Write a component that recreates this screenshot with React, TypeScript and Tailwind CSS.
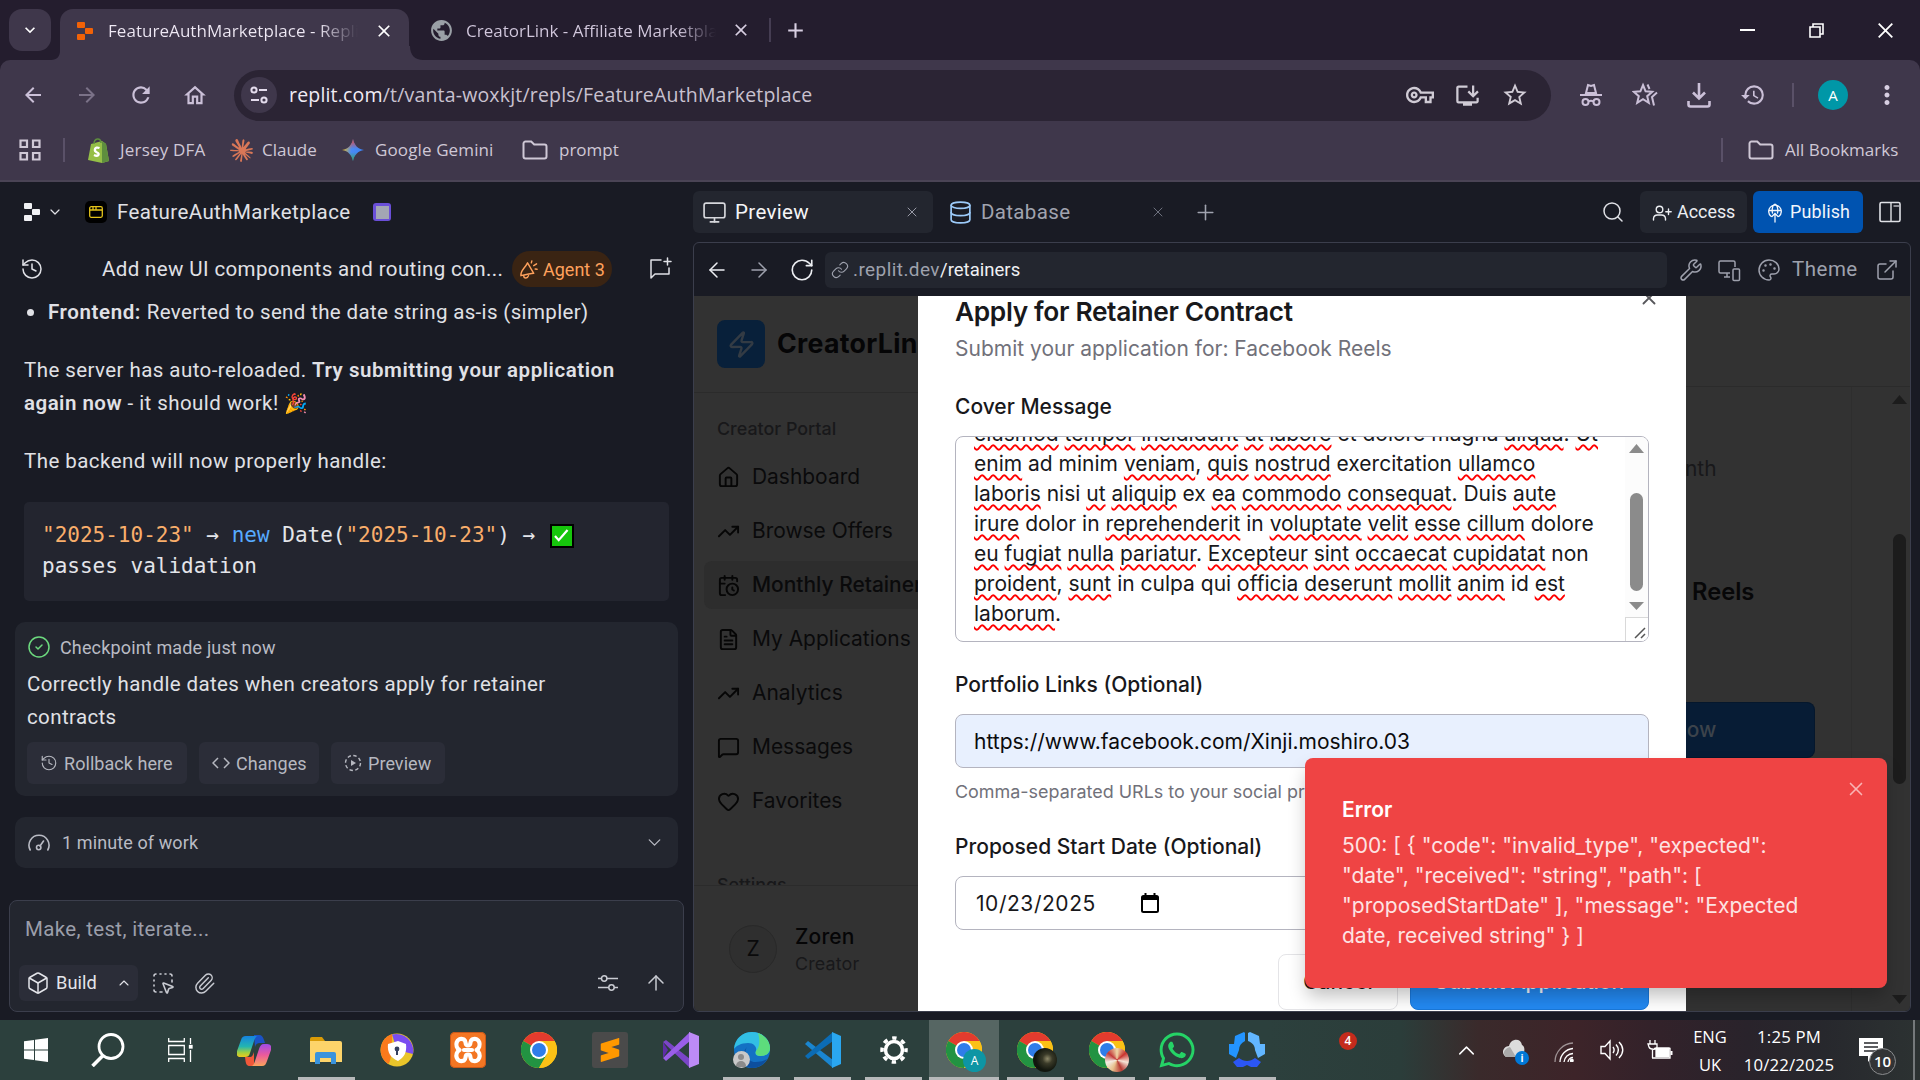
import type { ReactNode } from "react";
import {
  ArrowLeft, ArrowRight, ArrowUp, CalendarClock, ChevronDown, ChevronUp, Database, ExternalLink, FileText,
  Heart, History, House, Link, MessageSquare, Monitor, Palette, Paperclip, Plus, RotateCw, Search,
  SquareDashedMousePointer, TrendingUp, Wrench, X, Zap, Box, CircleCheck,
} from "lucide-react";
import {
  MdArrowBack, MdArrowForward, MdClose, MdHistory, MdMoreVert, MdOutlineHome, MdOutlineInstallDesktop,
  MdOutlineVpnKey, MdPublic, MdRefresh, MdStarBorder, MdExpandMore, MdAdd,
} from "react-icons/md";
import { FaWhatsapp } from "react-icons/fa6";
import { SiSublimetext, SiXampp, SiClaude } from "react-icons/si";

const UI = "font-['Open_Sans','Noto_Sans',sans-serif]";
const REPLIT = "font-['Roboto','Noto_Sans',sans-serif]";
const INTER = "font-['Inter',sans-serif]";

/* A fixed-size cell that centres an icon. */
function Cell({ className, children }: { className: string; children?: ReactNode }) {
  return <div className={`flex shrink-0 items-center justify-center ${className}`}>{children}</div>;
}

function ReplitMark({ className }: { className: string }) {
  return (
    <svg viewBox="0 0 16 18" className={className} fill="currentColor">
      <rect x="0" y="0" width="8" height="6" rx="1" />
      <rect x="8" y="6" width="8" height="6" rx="1" />
      <rect x="0" y="12" width="8" height="6" rx="1" />
    </svg>
  );
}

function FolderIcon() {
  return (
    <svg viewBox="0 0 26 20" className="h-5 w-[26px]" fill="none" stroke="currentColor" strokeWidth="2">
      <path d="M1.5 3.5a2 2 0 0 1 2-2h5.7l3 3h10.3a2 2 0 0 1 2 2v10a2 2 0 0 1-2 2h-19a2 2 0 0 1-2-2z" />
    </svg>
  );
}

function TabStrip() {
  return (
    <div className="flex h-[60px] bg-[#241d2e] text-[#d8cfe2]">
      <Cell className="ml-[9px] mt-[9px] h-[42px] w-[42px] rounded-[13px] bg-[#3f374b]">
        <MdExpandMore className="size-[20px] text-white" />
      </Cell>
      <svg viewBox="0 0 14 14" className="mt-[46px] h-[14px] w-[14px] shrink-0 -mr-[5px]" fill="#3f374b">
        <path d="M14 0v14H0c6 0 9-4 9-9V0z" />
      </svg>
      <div className="mt-[9px] flex h-[51px] w-[349px] items-center rounded-t-[13px] bg-[#3f374b] pb-[8px]">
        <ReplitMark className="ml-[17px] h-[18px] w-[16px] text-[#f26207]" />
        <div className="ml-[15px] w-[250px] overflow-hidden whitespace-nowrap bg-linear-to-r from-[#efe9f5] from-84% to-[#3f374b] bg-clip-text pt-px text-[17px] tracking-[0.050px] text-transparent">
          FeatureAuthMarketplace - Replit
        </div>
        <MdClose className="ml-[16px] size-[20px] text-white" />
      </div>
      <svg viewBox="0 0 14 14" className="mt-[46px] h-[14px] w-[14px] shrink-0" fill="#3f374b">
        <path d="M0 0v14h14C6 14 1 9 1 0z" />
      </svg>
      <div className="mt-[9px] flex h-[42px] items-center">
        <MdPublic className="ml-[6px] size-[25px] text-[#9aa0a6]" />
        <div className="ml-[12px] w-[250px] overflow-hidden whitespace-nowrap bg-linear-to-r from-[#d3c9de] from-85% to-[#241d2e] bg-clip-text pt-px text-[17px] text-transparent">
          CreatorLink - Affiliate Marketplace
        </div>
        <MdClose className="ml-[15px] size-[20px]" />
        <div className="ml-[18px] h-[24px] w-[2px] bg-[#453d52]" />
        <MdAdd className="ml-[12px] size-[25px]" />
      </div>
      <div className="ml-auto flex h-[60px] items-center text-white">
        <Cell className="w-[70px]"><div className="h-[2px] w-[15px] bg-white" /></Cell>
        <Cell className="w-[69px]">
          <svg viewBox="0 0 15 15" className="size-[15px]" fill="none" stroke="white" strokeWidth="1.6">
            <path d="M1 4h10v10H1zM4 4V1h10v10h-3" />
          </svg>
        </Cell>
        <Cell className="w-[69px]">
          <svg viewBox="0 0 15 15" className="size-[15px]" fill="none" stroke="white" strokeWidth="1.8">
            <path d="M.7.7l13.6 13.6M14.3.7L.7 14.3" />
          </svg>
        </Cell>
      </div>
    </div>
  );
}

function AddressBar() {
  return (
    <div className="flex h-[70px] items-center rounded-t-[10px] bg-[#3f374b] text-[#cbc0d8]">
      <Cell className="ml-[20px] w-[26px]"><MdArrowBack className="size-[24px]" /></Cell>
      <Cell className="ml-[28px] w-[26px]"><MdArrowForward className="size-[24px] text-[#7b7288]" /></Cell>
      <Cell className="ml-[28px] w-[26px]"><MdRefresh className="size-[26px]" /></Cell>
      <Cell className="ml-[28px] w-[26px]"><MdOutlineHome className="size-[27px]" /></Cell>
      <div className="ml-[26px] flex h-[51px] w-[1317px] items-center rounded-full bg-[#2b2434]">
        <Cell className="ml-[7px] size-[36px] rounded-full bg-[#3f374b]">
          <svg viewBox="0 0 20 20" className="size-[20px]" fill="none" stroke="#e4dced" strokeWidth="2">
            <circle cx="5" cy="5" r="2.6" /><path d="M10 5h8M2 15h8" /><circle cx="15" cy="15" r="2.6" />
          </svg>
        </Cell>
        <div className="ml-[12px] whitespace-nowrap text-[19.5px] tracking-[0.18px] text-[#c9c2d0]">
          <span className="text-[#f1ecf5]">replit.com</span>/t/vanta-woxkjt/repls/FeatureAuthMarketplace
        </div>
        <MdOutlineVpnKey className="ml-auto size-[28px] text-[#d0cbd5]" />
        <MdOutlineInstallDesktop className="ml-[20px] size-[27px] text-[#d0cbd5]" />
        <MdStarBorder className="ml-[20px] mr-[22px] size-[28px] text-[#d0cbd5]" />
      </div>
      <Cell className="ml-[27px] w-[26px]">
        <svg viewBox="0 0 22 24" className="h-[24px] w-[22px]" fill="none" stroke="currentColor" strokeWidth="2">
          <path d="M6 10l2-8 3 1 3-1 2 8zM0 12h22" /><circle cx="5.5" cy="19" r="3" /><circle cx="16.500" cy="19" r="3" /><path d="M8.500 18.500c1.500-1 3.500-1 5 0" />
        </svg>
      </Cell>
      <Cell className="ml-[27px] w-[28px]">
        <svg viewBox="0 0 26 26" className="size-[26px]" fill="none" stroke="currentColor" strokeWidth="2">
          <path d="M11 3l2.600 6.300 6.600.5-5 4.400 1.600 6.600L11 17.200l-5.800 3.600 1.600-6.600-5-4.400 6.600-.5z" />
          <path d="M15.500 2.500l2 4.500M25 10.500l-5 4.500 2 8.500" />
        </svg>
      </Cell>
      <Cell className="ml-[27px] w-[26px]">
        <svg viewBox="0 0 24 26" className="h-[26px] w-[24px]" fill="none" stroke="currentColor" strokeWidth="2.600">
          <path d="M12 1v15M6 10.500l6 6 6-6M1.500 19v3.500a2 2 0 0 0 2 2h17a2 2 0 0 0 2-2V19" />
        </svg>
      </Cell>
      <Cell className="ml-[28px] w-[26px]"><MdHistory className="size-[26px]" /></Cell>
      <div className="ml-[26px] h-[24px] w-[2px] bg-[#5a5168]" />
      <Cell className="ml-[24px] size-[30px] rounded-full bg-[#0097a7] text-[15px] text-white">A</Cell>
      <MdMoreVert className="ml-[24px] size-[30px] text-[#d8cfe2]" />
    </div>
  );
}

function Bookmarks() {
  return (
    <div className="flex h-[50px] items-center bg-[#3f374b] pb-[10px] text-[17px] whitespace-nowrap text-[#cfc8d6]">
      <svg viewBox="0 0 22 22" className="ml-[19px] size-[22px]" fill="none" stroke="#cfc8d6" strokeWidth="2.200">
        <path d="M1.500 1.500h6.500V8H1.500zM14 1.500h6.500V8H14zM1.500 14h6.500v6.500H1.500zM14 14h6.500v6.500H14z" />
      </svg>
      <div className="ml-[22px] h-[24px] w-[2px] bg-[#5a5168]" />
      <svg viewBox="0 0 22 25" className="ml-[23px] h-[25px] w-[22px]">
        <path d="M3 6l11-3 4 3 3 17-7 2L0 22z" fill="#95bf47" /><path d="M14 3l4 3 3 17-7 2z" fill="#5e8e3e" />
        <path d="M6 6c0-6 7-7 7-1" fill="none" stroke="#5e8e3e" strokeWidth="1.500" />
        <path d="M11.500 10c-5-2-6 3-2.500 4.500s1 4.500-3 2.500" fill="none" stroke="white" strokeWidth="2.300" />
      </svg>
      <div className="ml-[10px] w-[110px] tracking-[0.200px]">Jersey DFA</div>
      <SiClaude className="size-[23px] text-[#d97757]" />
      <div className="ml-[9px] w-[80px]">Claude</div>
      <svg viewBox="0 0 22 22" className="size-[22px]">
        <defs>
          <linearGradient id="gem" x1="0" y1="0.300" x2="1" y2="0.500">
            <stop offset="0" stopColor="#fbbc04" /><stop offset=".45" stopColor="#4a8af4" /><stop offset="1" stopColor="#3b82f6" />
          </linearGradient>
          <linearGradient id="gem2" x1="0" y1="0" x2="0" y2="1">
            <stop offset="0" stopColor="#ea4335" /><stop offset=".45" stopColor="#ea4335" stopOpacity="0" />
            <stop offset=".6" stopColor="#34a853" stopOpacity="0" /><stop offset="1" stopColor="#34a853" />
          </linearGradient>
        </defs>
        <path d="M11 0c1 6 5 10 11 11-6 1-10 5-11 11C10 16 6 12 0 11 6 10 10 6 11 0z" fill="url(#gem)" />
        <path d="M11 0c1 6 5 10 11 11-6 1-10 5-11 11C10 16 6 12 0 11 6 10 10 6 11 0z" fill="url(#gem2)" />
      </svg>
      <div className="ml-[11px] w-[147px] tracking-[0.120px]">Google Gemini</div>
      <FolderIcon />
      <div className="ml-[11px]">prompt</div>
      <div className="ml-auto h-[24px] w-[2px] bg-[#5a5168]" />
      <div className="ml-[25px] flex"><FolderIcon /></div>
      <div className="ml-[11px] w-[135px]">All Bookmarks</div>
    </div>
  );
}

function SmallButton({ className, icon, label }: { className: string; icon: ReactNode; label: string }) {
  return (
    <div className={`flex h-[42px] items-center rounded-[6px] bg-[#2b2d38] pl-[13px] text-[18px] text-[#b6b8c0] ${className}`}>
      {icon}
      <span className="ml-[6px] whitespace-nowrap">{label}</span>
    </div>
  );
}

function AgentPanel() {
  return (
    <div className="flex w-[693px] shrink-0 flex-col text-[20.500px] tracking-[0.330px] whitespace-nowrap text-[#e0e1e6]">
      <div className="mt-[9px] flex h-[42px] items-center">
        <ReplitMark className="ml-[24px] h-[18px] w-[16px] text-[#f0f1f4]" />
        <ChevronDown className="ml-[7px] size-[16px]" strokeWidth={1.8} />
        <Cell className="ml-[22px] size-[22px] rounded-[5px] bg-black">
          <svg viewBox="0 0 14 12" className="h-[12px] w-[14px]" fill="none" stroke="#e3c31a" strokeWidth="1.300">
            <rect x=".7" y=".7" width="12.600" height="10.600" rx="1.500" /><path d="M1 4h12M4 .7V4M7 .7V4" />
          </svg>
        </Cell>
        <span className="ml-[10px] w-[256px] tracking-[0.420px]">FeatureAuthMarketplace</span>
        <Cell className="size-[18px] rounded-[3px] bg-[#6a4fd8]"><div className="size-[13px] bg-[#a3a6b4]" /></Cell>
      </div>
      <div className="mt-[18px] flex h-[36px] items-center">
        <History className="ml-[20px] size-[24px]" strokeWidth={1.5} />
        <span className="ml-[58px] w-[410px] tracking-[0.380px]">Add new UI components and routing con...</span>
        <div className="flex h-[36px] w-[100px] items-center rounded-full bg-[#3a2413] pt-px text-[18px] tracking-normal text-[#ffa15c]">
          <svg viewBox="0 0 20 20" className="ml-[7px] size-[19px]" fill="none" stroke="currentColor" strokeWidth="1.500" strokeLinejoin="round" strokeLinecap="round">
            <path d="M9 3l6.500 11c-3 .2-10 1.700-13.500 2.500C1.500 11 6 9 9 3zM5 16.500c0 3 4 3.500 5 0M13 3l.5-2M15.500 6l3-2M17 9.500l2 .3" />
          </svg>
          <span className="ml-[5px]">Agent 3</span>
        </div>
        <svg viewBox="0 0 24 24" className="ml-[36px] size-[24px]" fill="none" stroke="currentColor" strokeWidth="1.500" strokeLinecap="round" strokeLinejoin="round">
          <path d="M13 3H3v18l4-4h14v-6M19.500 1v7M16 4.500h7" />
        </svg>
      </div>
      <div className="mt-[9px] flex h-[33px] items-center">
        <div className="ml-[27px] mr-[14px] size-[7px] rounded-full bg-[#e0e1e6]" />
        <span className="tracking-[0.350px]"><b className="font-semibold tracking-[0.600px]">Frontend: </b>Reverted to send the date string as-is (simpler)</span>
      </div>
      <div className="mt-[25px] ml-[24px] leading-[33px] tracking-[0.430px]">
        The server has auto-reloaded. <b className="font-semibold tracking-[0.540px]">Try submitting your application</b>
        <br />
        <b className="font-semibold tracking-[0.480px]">again now</b> - it should work! <span className="text-[19px]">🎉</span>
      </div>
      <div className="mt-[25px] ml-[24px] leading-[33px] tracking-[0.450px]">The backend will now properly handle:</div>
      <div className="mt-[24px] ml-[24px] h-[99px] w-[645px] rounded-[5px] bg-[#23252f] pt-[18px] pl-[18px] font-['DejaVu_Sans_Mono',monospace] text-[21px] leading-[31px] tracking-normal text-[#e4e5ea]">
        <div className="flex h-[31px] items-center whitespace-pre">
          <span className="text-[#f9ae6b]">"2025-10-23"</span>{" → "}<span className="text-[#57abff]">new</span>{" Date("}
          <span className="text-[#f9ae6b]">"2025-10-23"</span>{") → "}
          <Cell className="ml-[2px] size-[24px] border-2 border-black bg-[#16c60c]">
            <svg viewBox="0 0 16 14" className="h-[13px] w-[15px]" fill="none" stroke="white" strokeWidth="2.400"><path d="M1 7.500l4 4.500L14.500 1" /></svg>
          </Cell>
        </div>
        passes validation
      </div>
      <div className="mt-[21px] ml-[15px] h-[174px] w-[663px] rounded-[10px] bg-[#23262f]">
        <div className="mt-[10px] flex h-[30px] items-center text-[18px] tracking-[0.150px] text-[#b9bbc4]">
          <CircleCheck className="ml-[12px] size-[24px] text-[#6cd97e]" strokeWidth={1.5} />
          <span className="ml-[9px]">Checkpoint made just now</span>
        </div>
        <div className="mt-[6px] ml-[12px] leading-[33px] tracking-[0.380px]">
          Correctly handle dates when creators apply for retainer
          <br />
          contracts
        </div>
        <div className="mt-[8px] ml-[12px] flex gap-3 tracking-[0.050px]">
          <SmallButton className="w-[160px]" icon={<History className="size-[18px]" strokeWidth={1.5} />} label="Rollback here" />
          <SmallButton className="w-[120px]" icon={
            <svg viewBox="0 0 18 18" className="size-[18px]" fill="none" stroke="currentColor" strokeWidth="1.500"><path d="M6 4L1 9l5 5M12 4l5 5-5 5" /></svg>
          } label="Changes" />
          <SmallButton className="w-[114px]" icon={
            <svg viewBox="0 0 18 18" className="size-[18px]" fill="none" stroke="currentColor" strokeWidth="1.400"><circle cx="9" cy="9" r="7.500" strokeDasharray="3.500 2.400" /><path d="M7 6l5 3-5 3z" fill="currentColor" stroke="none" /></svg>
          } label="Preview" />
        </div>
      </div>
      <div className="mt-[21px] ml-[15px] flex h-[51px] w-[663px] items-center rounded-[10px] bg-[#23262f] text-[18px] tracking-[0.100px] text-[#b9bbc4]">
        <svg viewBox="0 0 22 18" className="ml-[13px] h-[18px] w-[22px]" fill="none" stroke="currentColor" strokeWidth="1.600" strokeLinecap="round">
          <path d="M2.200 16A10 10 0 1 1 19.800 16M12 12l3.500-5" /><circle cx="10.700" cy="13.500" r="2.200" />
        </svg>
        <span className="ml-[12px]">1 minute of work</span>
        <ChevronDown className="mr-[13px] ml-auto size-[21px]" strokeWidth={1.5} />
      </div>
      <div className="mt-[32px] ml-[9px] h-[112px] w-[675px] rounded-[8px] border border-[#3b3e4c] bg-[#23262f]">
        <div className="mt-[12px] ml-[15px] leading-[33px] text-[#9b9eaa]">Make, test, iterate...</div>
        <div className="mt-[19px] flex h-[36px] items-center text-[#c9cbd2]">
          <div className="ml-[9px] flex h-[36px] w-[119px] items-center rounded-[6px] bg-[#2b2d38] text-[18.200px] tracking-[0.100px] text-[#e4e5ea]">
            <Box className="ml-[7px] size-[24px]" strokeWidth={1.5} />
            <span className="ml-[6px] w-[42px]">Build</span>
            <ChevronUp className="ml-[18px] size-[16px]" strokeWidth={1.6} />
          </div>
          <SquareDashedMousePointer className="ml-[13px] size-[24px]" strokeWidth={1.6} />
          <Paperclip className="ml-[18px] size-[23px]" strokeWidth={1.5} />
          <svg viewBox="0 0 22 18" className="mr-[25px] ml-auto h-[18px] w-[22px]" fill="none" stroke="currentColor" strokeWidth="1.500">
            <path d="M1 4.500h4M9.500 4.500H21M1 13.500h11M17 13.500h4" /><circle cx="7.200" cy="4.500" r="2.700" /><circle cx="14.500" cy="13.500" r="2.700" />
          </svg>
          <ArrowUp className="mr-[15px] size-[24px]" strokeWidth={1.5} />
        </div>
      </div>
    </div>
  );
}

function PaneTabs() {
  return (
    <div className="mt-[9px] flex h-[42px] items-center text-[20.500px] tracking-[0.350px] whitespace-nowrap text-[#a0a3af]">
      <div className="flex h-[42px] w-[240px] items-center rounded-[6px] bg-[#23262f]">
        <Monitor className="ml-[9px] size-[25px] text-[#d6d7dc]" strokeWidth={1.6} />
        <span className="ml-[8px] text-[#f5f5f7]">Preview</span>
        <X className="mr-[13px] ml-auto size-[16px]" strokeWidth={1.4} />
      </div>
      <Database className="ml-[15px] size-[25px] text-[#9ccbfa]" strokeWidth={1.6} />
      <span className="ml-[8px] w-[90px]">Database</span>
      <X className="ml-[79px] size-[16px] text-[#747784]" strokeWidth={1.4} />
      <Plus className="ml-[27px] size-[25px]" strokeWidth={1.5} />
      <Search className="ml-auto size-[24px] text-[#e0e1e6]" strokeWidth={1.5} />
      <div className="ml-[15px] flex h-[42px] w-[107px] items-center rounded-[6px] bg-[#23262f] pt-px text-[17.900px] tracking-normal text-[#eceef2]">
        <svg viewBox="0 0 20 20" className="ml-[12px] size-[20px]" fill="none" stroke="currentColor" strokeWidth="1.400" strokeLinecap="round">
          <circle cx="7.500" cy="6.500" r="3.300" /><path d="M1.500 17v-1.500a4 4 0 0 1 4-3.500h4a4 4 0 0 1 4 3.500V17M16.500 6v5.500M13.800 8.700h5.400" />
        </svg>
        <span className="ml-[5px]">Access</span>
      </div>
      <div className="ml-[6px] flex h-[42px] w-[110px] items-center rounded-[6px] bg-[#0053b0] pt-px text-[17.900px] tracking-[0.150px] text-[#f2f6fc]">
        <svg viewBox="0 0 16 20" className="ml-[14px] h-[20px] w-[16px]" fill="none" stroke="currentColor" strokeWidth="1.300" strokeLinecap="round">
          <path d="M4 13.300a6.300 6.300 0 1 1 8 0M1.700 7.500h12.600M5.500 10C4.500 6 6 1.500 8 1.200c2 .3 3.500 4.800 2.500 8.800M8 11v8M5 13.500l3-3 3 3" />
        </svg>
        <span className="ml-[7px]">Publish</span>
      </div>
      <svg viewBox="0 0 22 22" className="mr-[19px] ml-[16px] size-[22px] text-[#e0e1e6]" fill="none" stroke="currentColor" strokeWidth="1.600">
        <rect x="1" y="1.500" width="20" height="19" rx="1.500" /><path d="M12 1.500v19" strokeWidth="1.400" /><path d="M14.500 5H20" strokeWidth="1.200" />
      </svg>
    </div>
  );
}

function PaneToolbar() {
  return (
    <div className="flex h-[53px] items-center text-[#9ea1ad]">
      <ArrowLeft className="ml-[11px] size-[24px] text-[#eceef2]" strokeWidth={1.5} />
      <ArrowRight className="ml-[18px] size-[24px]" strokeWidth={1.5} />
      <RotateCw className="ml-[18px] size-[26px] text-[#eceef2]" strokeWidth={1.5} />
      <div className="ml-[10px] flex h-[36px] w-[842px] items-center rounded-[6px] bg-[#23262f] text-[18.500px] tracking-[0.020px]">
        <Link className="ml-[6px] size-[18px]" strokeWidth={1.5} />
        <span className="ml-[4px] w-[87px] pt-[2px] text-[19px] tracking-[0.420px]">.replit.dev</span>
        <span className="pt-[2px] text-[#f0f1f4]">/retainers</span>
      </div>
      <Wrench className="ml-[12px] size-[24px]" strokeWidth={1.5} />
      <svg viewBox="0 0 24 24" className="ml-[14px] size-[24px]" fill="none" stroke="currentColor" strokeWidth="1.500">
        <path d="M13 15H3.500A1.500 1.500 0 0 1 2 13.500v-9A1.500 1.500 0 0 1 3.500 3h13A1.500 1.500 0 0 1 18 4.500V9M10 15v4M7 19h6" /><rect x="16" y="11" width="6.500" height="11.500" rx="1" />
      </svg>
      <Palette className="ml-[16px] size-[24px]" strokeWidth={1.5} />
      <span className="ml-[11px] w-[66px] text-[20.500px] tracking-[0.500px]">Theme</span>
      <ExternalLink className="ml-[17px] size-[24px]" strokeWidth={1.5} />
    </div>
  );
}

function NavItem({ icon, label, active }: { icon: ReactNode; label: string; active?: boolean }) {
  return (
    <div className={`flex h-[48px] items-center rounded-l-[8px] pl-[11px] ${active ? "bg-[#2d2d2d] font-medium" : ""}`}>
      <Cell className="size-[26px]">{icon}</Cell>
      <span className="ml-[11px]">{label}</span>
    </div>
  );
}

function Sidebar() {
  const ic = "size-[23px] text-[#060606]";
  return (
    <div className="flex w-[224px] shrink-0 flex-col overflow-hidden text-[20.950px] whitespace-nowrap text-[#0a0a0b]">
      <div className="flex h-[97px] shrink-0 items-start border-b border-[#2b2b2b] pt-[24px] pl-[23px]">
        <Cell className="size-[48px] rounded-[8px] bg-[#08203a]"><Zap className="size-[29px] text-[#333b44]" strokeWidth={2} /></Cell>
        <span className="ml-[12px] text-[26.700px] leading-[47px] font-bold tracking-[0.300px] text-[#050506]">CreatorLink</span>
      </div>
      <div className="flex h-[60px] shrink-0 items-center pt-[12px] pl-[23px] text-[17.900px] font-medium text-[#18181a]">Creator Portal</div>
      <div className="ml-[10px] flex flex-col gap-[6px]">
        <NavItem icon={<House className={ic} />} label="Dashboard" />
        <NavItem icon={<TrendingUp className={ic} />} label="Browse Offers" />
        <NavItem icon={<CalendarClock className={ic} />} label="Monthly Retainers" active />
        <NavItem icon={<FileText className={ic} />} label="My Applications" />
        <NavItem icon={<TrendingUp className={ic} />} label="Analytics" />
        <NavItem icon={<MessageSquare className={ic} />} label="Messages" />
        <NavItem icon={<Heart className={ic} />} label="Favorites" />
      </div>
      <div className="h-[60px] shrink-0 overflow-hidden pt-[46px] pl-[23px] text-[17.900px] leading-[27px] font-medium text-[#18181a]">Settings</div>
      <div className="flex flex-1 border-t border-[#2b2b2b] pt-[39px] pl-[35px]">
        <Cell className="size-[48px] rounded-full border border-[#292929] bg-[#2f2f2f] text-[21px]">Z</Cell>
        <div className="ml-[18px] -mt-[3px]">
          <div className="leading-[30px] font-medium tracking-[0.200px] text-[#050506]">Zoren</div>
          <div className="-mt-px text-[17.900px] leading-[25px] tracking-[0.150px] text-[#18181a]">Creator</div>
        </div>
      </div>
    </div>
  );
}

/* Words that end in "~" are flagged by the spell checker. */
const COVER_LINES = [
  "eiusmod~ tempor~ incididunt~ ut~ labore~ et dolore magna aliqua~. Ut~",
  "enim~ ad minim veniam~, quis~ nostrud~ exercitation ullamco~",
  "laboris~ nisi ut~ aliquip~ ex ea~ commodo~ consequat~. Duis aute~",
  "irure~ dolor in reprehenderit~ in voluptate~ velit~ esse~ cillum~ dolore",
  "eu~ fugiat~ nulla~ pariatur~. Excepteur~ sint~ occaecat~ cupidatat~ non",
  "proident~, sunt~ in culpa qui officia~ deserunt~ mollit~ anim~ id est~",
  "laborum~.",
];

function SpellLine({ text }: { text: string }) {
  return (
    <div className="h-[30px] leading-[30px]">
      {text.split(" ").map((word, i) => {
        const [base, tail] = word.split("~");
        return (
          <span key={i}>
            {i > 0 && " "}
            {tail === undefined ? base : (
              <>
                <span className="underline decoration-[#ff0000] decoration-wavy decoration-[1.600px] underline-offset-[3px] [text-decoration-skip-ink:none]">{base}</span>
                {tail}
              </>
            )}
          </span>
        );
      })}
    </div>
  );
}

function FieldLabel({ className, children }: { className: string; children: ReactNode }) {
  return <div className={`h-[30px] shrink-0 leading-[30px] font-medium ${className}`}>{children}</div>;
}

function RetainerDialog() {
  return (
    <div className="relative flex w-[768px] shrink-0 flex-col overflow-hidden bg-white px-[37px] text-[21px] whitespace-nowrap text-[#18181b]">
      <X className="absolute -top-[9px] right-[26px] size-[22px] text-[#57575b]" strokeWidth={2} />
      <div className="h-[32px] shrink-0 text-[26.300px] leading-[31px] font-semibold tracking-[-0.340px]">Apply for Retainer Contract</div>
      <div className="mt-[6px] h-[30px] shrink-0 leading-[30px] text-[#71717a]">Submit your application for: Facebook Reels</div>
      <FieldLabel className="mt-[28px]">Cover Message</FieldLabel>
      <div className="mt-[14px] flex h-[206px] shrink-0 overflow-hidden rounded-[8px] border border-[#b4b4bf]">
        <div className="-mt-[18px] flex-1 pl-[18px]">
          {COVER_LINES.map((line) => <SpellLine key={line} text={line} />)}
        </div>
        <div className="flex w-[23px] flex-col items-center bg-[#fcfcfc]">
          <svg viewBox="0 0 15 9" className="mt-[7px] h-[9px] w-[15px]" fill="#8b8b8b"><path d="M0 9L7.500 0 15 9z" /></svg>
          <div className="mt-[40px] h-[98px] w-[13px] rounded-full bg-[#8b8b8b]" />
          <svg viewBox="0 0 15 8" className="mt-[11px] h-[8px] w-[15px]" fill="#8b8b8b"><path d="M0 0h15L7.500 8z" /></svg>
          <div className="mt-auto flex h-[24px] w-full items-end justify-end border-t border-l border-[#d9d9d9] bg-white p-[2px]">
            <svg viewBox="0 0 12 12" className="size-[12px]" fill="none" stroke="#555" strokeWidth="1.500"><path d="M1 11L11 1M7 11l4-4" /></svg>
          </div>
        </div>
      </div>
      <FieldLabel className="mt-[28px]">Portfolio Links (Optional)</FieldLabel>
      <div className="mt-[14px] flex h-[54px] shrink-0 items-center rounded-[8px] border border-[#b4b4bf] bg-[#e8f0fe] pt-[2px] pl-[18px] text-[#0b0b0d]">
        https://www.facebook.com/Xinji.moshiro.03
      </div>
      <div className="mt-[11px] h-[26px] w-[694px] shrink-0 text-[17.950px] leading-[26px] text-[#71717a]">Comma-separated URLs to your social profiles</div>
      <FieldLabel className="mt-[27px]">Proposed Start Date (Optional)</FieldLabel>
      <div className="mt-[14px] flex h-[54px] shrink-0 items-center rounded-[8px] border border-[#b4b4bf] pl-[20px]">
        <span className="w-[165px] pt-[2px] tracking-[0.550px]">10/23/2025</span>
        <svg viewBox="0 0 18 20" className="h-[20px] w-[18px]" fill="none" stroke="black" strokeWidth="2">
          <rect x="1" y="3" width="16" height="16" rx="1.500" /><path d="M1 5h16" strokeWidth="4" /><path d="M4.500 0v3M13.500 0v3" />
        </svg>
      </div>
      <div className="mt-[24px] flex h-[56px] shrink-0 justify-end gap-3 font-medium">
        <Cell className="w-[120px] rounded-[8px] border border-[#e4e4e7]">Cancel</Cell>
        <Cell className="w-[239px] rounded-[8px] border border-[#1a78da] bg-[#2389f2] text-[#f5faff]">Submit Application</Cell>
      </div>
    </div>
  );
}

function DimmedListing() {
  return (
    <div className="flex min-w-0 flex-1 flex-col overflow-hidden text-[20.900px] whitespace-nowrap text-[#18181a]">
      <div className="h-[91px] shrink-0 border-b border-[#2b2b2b]" />
      <div className="flex flex-1">
        <div className="flex w-[166px] flex-col border-r border-[#2e2e2e]">
          <div className="mt-[67px] -ml-px h-[30px] leading-[30px]">nth</div>
          <div className="mt-[93px] ml-[6px] h-[30px] text-[23.700px] leading-[30px] font-semibold text-[#070708]">Reels</div>
          <div className="mt-[95px] h-[56px] w-[129px] overflow-hidden rounded-r-[8px] border border-l-0 border-[#05172c] bg-[#071c35] -indent-[15px] leading-[54px] font-medium text-[#3c434b]">Now</div>
          <div className="mt-[208px] h-[30px] leading-[30px]">tent for</div>
        </div>
        <div className="flex flex-1 flex-col items-end pr-[3px]">
          <svg viewBox="0 0 15 9" className="mt-[8px] h-[9px] w-[15px]" fill="#1c1c1c"><path d="M0 9L7.500 0 15 9z" /></svg>
          <div className="mt-[130px] mr-[1px] h-[250px] w-[13px] rounded-full bg-[#1c1c1c]" />
          <svg viewBox="0 0 15 9" className="mt-auto mb-[7px] h-[9px] w-[15px]" fill="#1c1c1c"><path d="M0 0h15L7.500 9z" /></svg>
        </div>
      </div>
    </div>
  );
}

function ErrorToast() {
  return (
    <div className="absolute top-[462px] left-[611px] h-[230px] w-[582px] rounded-[8px] bg-[#ef4444] pt-[37px] pl-[37px] text-[21px] leading-[30px] whitespace-nowrap text-[#fde3e3] shadow-[0_10px_18px_-2px_rgba(0,0,0,0.25)]">
      <X className="absolute top-[20px] right-[20px] size-[22px] text-[#f9b4b4]" strokeWidth={1.8} />
      <div className="font-semibold text-white">Error</div>
      <div className="mt-[6px]">
        500: [ {"{"} "code": "invalid_type", "expected":<br />
        "date", "received": "string", "path": [<br />
        "proposedStartDate" ], "message": "Expected<br />
        date, received string" {"}"} ]
      </div>
    </div>
  );
}

function Chrome({ children }: { children?: ReactNode }) {
  return (
    <div className="relative size-[36px]">
      <svg viewBox="0 0 36 36" className="size-[36px]">
        <circle cx="18" cy="18" r="18" fill="#fbc116" />
        <path d="M18 18L2.400 9A18 18 0 0 1 33.600 9z" fill="#e33b2e" />
        <path d="M18 18L2.400 9A18 18 0 0 0 18 36l7.800-13.500z" fill="#229342" />
        <path d="M18 9h15.600A18 18 0 0 1 18 36l7.800-13.500z" fill="#fbc116" />
        <circle cx="18" cy="18" r="9" fill="white" /><circle cx="18" cy="18" r="7" fill="#2f7de9" />
      </svg>
      {children}
    </div>
  );
}

function TaskItem({ className, open, active, children }: { className: string; open?: boolean; active?: boolean; children: ReactNode }) {
  return (
    <div className={`flex h-[60px] shrink-0 flex-col items-center ${active ? "bg-[#566663]" : ""} ${className}`}>
      <Cell className="h-[57px] w-full pb-[1px] pt-[4px]">{children}</Cell>
      <div className={`h-[3px] ${active ? "w-full" : "w-[57px]"} ${open ? "bg-[#b7b9ba]" : ""}`} />
    </div>
  );
}

function Taskbar() {
  return (
    <div className={`flex h-[60px] items-start bg-[linear-gradient(90deg,#2c403d_0%,#2c403d_66%,#2b3d3a_73%,#3a2a2b_77%,#3d2429_82%,#33222a_86%,#29232b_91%,#27282d_95%,#2c3232_100%)] text-white ${UI}`}>
      <TaskItem className="w-[72px]">
        <svg viewBox="0 0 24 24" className="size-[24px]" fill="white"><path d="M0 3.300L10 2v9.500H0zM11 1.800L24 0v11.500H11zM0 12.500h10V22L0 20.700zM11 12.500h13V24l-13-1.800z" /></svg>
      </TaskItem>
      <TaskItem className="w-[71px]">
        <svg viewBox="0 0 34 34" className="size-[34px]" fill="none" stroke="white" strokeWidth="2.800"><circle cx="20" cy="13.500" r="12" /><path d="M12 22.500L1.500 33" strokeWidth="3.600" /></svg>
      </TaskItem>
      <TaskItem className="w-[74px]">
        <svg viewBox="0 0 25 24" className="h-[24px] w-[25px]" fill="none" stroke="white" strokeWidth="1.300"><path d="M.7 0v3.500h15.600V0M.7 7.500h15.600v9H.7zM.7 24v-3.500h15.600V24M22.500 0v6M22.500 12v12" /><rect x="21.500" y="7.500" width="2.500" height="2.500" fill="white" /></svg>
      </TaskItem>
      <TaskItem className="w-[74px]">
        <svg viewBox="0 0 34 31" className="h-[31px] w-[34px]">
          <defs>
            <linearGradient id="cpa" x1="0" y1="0" x2="0" y2="1"><stop offset="0" stopColor="#1583e0" /><stop offset=".5" stopColor="#23b5b0" /><stop offset=".8" stopColor="#a6cf3c" /><stop offset="1" stopColor="#ecc71e" /></linearGradient>
            <linearGradient id="cpb" x1="0" y1="0" x2="0" y2="1"><stop offset="0" stopColor="#a04be8" /><stop offset=".5" stopColor="#ec5a9b" /><stop offset="1" stopColor="#fba45c" /></linearGradient>
          </defs>
          <path d="M17 0h5c3 0 4 2 5 5l1 3h-5c-3 0-4 1-5 4z" fill="#1b52c4" />
          <path d="M9 1h12c-2 0-3 2-4 5l-4 12c-1 3-2 4-5 4H3c-3 0-4-3-3-6l4-11c1-3 2-4 5-4z" fill="url(#cpa)" />
          <path d="M17 31H13c-3 0-4-2-4.500-5L8 22h5c2 0 3-2 4-5z" fill="#f0583a" />
          <path d="M25 31H14c2 0 3-2 4-5l4-12c1-3 2-5 5-5h3c4 0 5 3 4 6l-4 11c-1 3-2 5-5 5z" fill="url(#cpb)" />
        </svg>
      </TaskItem>
      <TaskItem className="w-[70px]" open>
        <svg viewBox="0 0 32 27" className="h-[27px] w-[32px]"><path d="M0 2a2 2 0 0 1 2-2h10l3 4H0z" fill="#d99b06" /><path d="M0 4h30a2 2 0 0 1 2 2v19H0z" fill="#fdd46a" /><path d="M5 27V17a2 2 0 0 1 2-2h17a2 2 0 0 1 2 2v10h-5v-6H10v6z" fill="#3a93dc" /></svg>
      </TaskItem>
      <TaskItem className="w-[71px]">
        <svg viewBox="0 0 34 34" className="size-[34px]"><circle cx="17" cy="17" r="16.500" fill="#e9c52a" /><path d="M12 1.500A17 17 0 0 1 33 21L17 17z" fill="#7a4df0" /><path d="M12 1A17 17 0 0 0 8 31c4-2 4-22 4-30z" fill="#fb7a1c" /><path d="M8 11l10-3 8 3c1 9-2 13-8 17C11 25 7 20 8 11z" fill="white" /><circle cx="17" cy="16" r="2.400" fill="#33405e" /><path d="M16 16h2v6h-2z" fill="#33405e" /></svg>
      </TaskItem>
      <TaskItem className="w-[71px]">
        <Cell className="size-[36px] rounded-[5px] bg-[#f37623] ring-1 ring-[#c8581a] ring-inset">
          <svg viewBox="0 0 30 30" className="size-[30px]" fill="none" stroke="white" strokeWidth="4.200" strokeLinecap="round" strokeLinejoin="round">
            <path d="M11 4.500c-8-3-10 7-4.500 10.500C1 18.500 3 28.500 11 25.500c3-2 0-6 4-6s1 4 4 6c8 3 10-7 4.500-10.500C29 11.500 27 1.500 19 4.500c-3 2 0 6-4 6s-1-4-4-6zM11 15h8" />
          </svg>
        </Cell>
      </TaskItem>
      <TaskItem className="w-[71px]"><Chrome /></TaskItem>
      <TaskItem className="w-[71px]">
        <Cell className="size-[36px] rounded-[3px] bg-[#4a4a4a]"><SiSublimetext className="size-[24px] text-[#ff9800]" /></Cell>
      </TaskItem>
      <TaskItem className="w-[71px]">
        <svg viewBox="0 0 36 36" className="size-[36px]"><path d="M0 10l3-2 24 19V36z" fill="#7b45c8" /><path d="M0 26l3 3L27 9V0z" fill="#9a5ee8" /><path d="M0 10v16l5-8z" fill="#5f2da8" /><path d="M26 0l10 4v28l-10 4z" fill="#bd8bf6" /></svg>
      </TaskItem>
      <TaskItem className="w-[71px]" open>
        <div className="relative size-[36px]">
          <svg viewBox="0 0 36 36" className="size-[36px]"><circle cx="18" cy="18" r="18" fill="#1371c4" /><path d="M0 17C1 6 9 0 18 0c10 0 18 7 18 16 0 6-5 8-9 8-6 0-6-3-5-5 1-3-1-8-8-8C7 11 2 14 0 17z" fill="#32bfe4" /><path d="M24 1c8 3 12 9 12 15 0 6-5 8-9 8-5 0-6-3-5-5 4-4 4-11 2-18z" fill="#5ddc7c" /><path d="M22 19c-1 2-1 5 5 5 3 0 6-1 8-3-1 3-2 5-4 7-4 2-12 2-16-4 0-3 2-8 7-5z" fill="#2c403d" fillOpacity=".0" /><path d="M13 15c-4 6 0 15 9 15 4 0 8-1 11-3-3 6-9 9-15 9C9 36 5 24 13 15z" fill="#0d4f9e" /></svg>
          <div className="absolute bottom-0 -left-px flex size-[17px] flex-col items-center overflow-hidden rounded-full bg-[#c9c9c9] pt-[3px]"><div className="size-[6px] rounded-full bg-[#8b8b8b]" /><div className="mt-px h-[6px] w-[10px] rounded-t-full bg-[#8b8b8b]" /></div>
        </div>
      </TaskItem>
      <TaskItem className="w-[71px]" open>
        <svg viewBox="0 0 36 36" className="size-[36px]"><path d="M0 12l3-3 25 19v8z" fill="#1a86d0" /><path d="M0 24l3 3L28 9V0z" fill="#0b6cb5" /><path d="M27 0l9 4v28l-9 4z" fill="#2aa7f0" /></svg>
      </TaskItem>
      <TaskItem className="w-[71px]" open>
        <svg viewBox="0 0 28 28" className="size-[28px]" fill="none" stroke="white"><circle cx="14" cy="14" r="8.500" strokeWidth="3.500" /><circle cx="14" cy="14" r="12" strokeWidth="3.500" strokeDasharray="4.400 5.025" strokeDashoffset="2.200" /></svg>
      </TaskItem>
      <TaskItem className="w-[70px]" open active>
        <Chrome><Cell className="absolute -right-[4px] -bottom-[4px] size-[23px] rounded-full bg-[#0e95a4] text-[12px]">A</Cell></Chrome>
      </TaskItem>
      <TaskItem className="w-[72px]" open>
        <Chrome><div className="absolute -right-[4px] -bottom-[4px] size-[24px] rounded-full bg-[radial-gradient(circle_at_60%_45%,#8f8a6a_0%,#3a3a28_25%,#12160e_60%)]" /></Chrome>
      </TaskItem>
      <TaskItem className="w-[71px]" open>
        <Chrome><div className="absolute -right-[4px] -bottom-[4px] size-[24px] rounded-full bg-[conic-gradient(#f0d9a8,#c8322e,#f6e4d6,#b83a34,#e8c18d,#f4ece2,#c23a3a,#f0d9a8)]" /></Chrome>
      </TaskItem>
      <TaskItem className="w-[70px]" open><FaWhatsapp className="size-[40px] text-[#25d366]" /></TaskItem>
      <TaskItem className="w-[70px]" open>
        <svg viewBox="0 0 36 36" className="size-[36px]"><path d="M6 4l9-4 1 1v8c-4 2-6 5-6 9l-3 8-7-4V12h5z" fill="#2394ff" /><path d="M30 4l-9-4-2 1v8c5 2 7 5 7 9l3 8 7-4V12h-5z" fill="#62b6ff" /><path d="M10 26c5 4 11 4 16 0l6 4-4 5h-6l-4-2-4 2H8l-4-5z" fill="#2b56f5" /></svg>
      </TaskItem>
      <Cell className="mt-[12px] ml-[57px] size-[18px] rounded-full bg-[#c42b1c] text-[12px] font-semibold">4</Cell>
      <div className="ml-[96px] flex h-[60px] items-center">
        <ChevronUp className="size-[27px]" strokeWidth={1.3} />
        <div className="relative ml-[22px] h-[24px] w-[24px]">
          <svg viewBox="0 0 24 24" className="size-[24px]"><path d="M4 19C-2 15 2 8 7 8c2-8 12-8 13-1 3 1 3 6 1 10z" fill="#dcdcdc" /><path d="M4 19C0 15 2 11 8 9l6 10z" fill="#aaa" /></svg>
          <Cell className="absolute -right-[3px] -bottom-[3px] size-[14px] rounded-full bg-[#0078d7] text-[10px] font-bold">i</Cell>
        </div>
        <svg viewBox="0 0 20 20" className="mt-[4px] ml-[28px] size-[20px]" fill="none" stroke="white" strokeWidth="1.300"><path d="M1 20A19 19 0 0 1 19 1" strokeOpacity=".5" /><path d="M6 20A14 14 0 0 1 19 6.500M10 20a9.500 9.500 0 0 1 9-8.500M14 20a5 5 0 0 1 5-4.500" /><circle cx="17.800" cy="18.500" r="1.300" fill="white" /></svg>
        <svg viewBox="0 0 24 24" className="ml-[26px] size-[24px]" fill="none" stroke="white" strokeWidth="1.400"><path d="M1 8.500h4l5-5.500v18l-5-5.500H1zM13 9c1.500 2 1.500 4 0 6M16 6.500c3 3.500 3 7.500 0 11M19 4c5 5 5 11 0 16" /></svg>
        <svg viewBox="0 0 26 20" className="ml-[23px] h-[20px] w-[26px]" fill="none" stroke="white" strokeWidth="1.300"><path d="M3 0v4M8 0v4M1 4h9v3c0 3-7 3-8 0zM5.500 9v9M7 8.500h16v9.500H5" /><rect x="9" y="8" width="13" height="8.500" fill="white" /><path d="M24.500 11v4" strokeWidth="2" /></svg>
      </div>
      <div className="ml-[19px] w-[36px] pt-[3px] text-center text-[16.500px] leading-[28px]">ENG<br />UK</div>
      <div className="ml-[11px] w-[100px] pt-[3px] text-center text-[16.800px] leading-[28px] tracking-[0.150px] whitespace-nowrap">1:25 PM<br />10/22/2025</div>
      <div className="relative ml-[20px] h-[60px] w-[42px]">
        <svg viewBox="0 0 24 26" className="mt-[18px] h-[26px] w-[24px]" fill="white"><path d="M0 0h24v18H14l-5 6v-6H0z" /><path d="M5 5h14M5 9h14M5 13h14" stroke="#27282d" strokeWidth="1.400" /></svg>
        <Cell className="absolute top-[28px] left-[10px] size-[27px] rounded-full border border-[#8a8c8e] bg-[#323436] text-[15px] font-semibold">10</Cell>
      </div>
      <div className="ml-auto h-[60px] w-[2px] bg-[#75797b]" />
      <div className="w-[5px]" />
    </div>
  );
}

export default function App() {
  return (
    <div className="flex h-[1080px] w-[1920px] flex-col overflow-hidden bg-[#191b24]">
      <div className={`flex flex-col bg-[#241d2e] ${UI}`}>
        <TabStrip />
        <AddressBar />
        <Bookmarks />
        <div className="h-[2px] bg-[#4a4455]" />
      </div>
      <div className={`flex h-[838px] ${REPLIT}`}>
        <AgentPanel />
        <div className="flex flex-1 flex-col">
          <PaneTabs />
          <div className="mt-[9px] mr-[9px] flex h-[770px] flex-col overflow-hidden rounded-[6px] border border-[#3b3e4c]">
            <PaneToolbar />
            <div className={`relative flex flex-1 bg-[#323232] ${INTER}`}>
              <Sidebar />
              <RetainerDialog />
              <DimmedListing />
              <ErrorToast />
            </div>
          </div>
        </div>
      </div>
      <Taskbar />
    </div>
  );
}
